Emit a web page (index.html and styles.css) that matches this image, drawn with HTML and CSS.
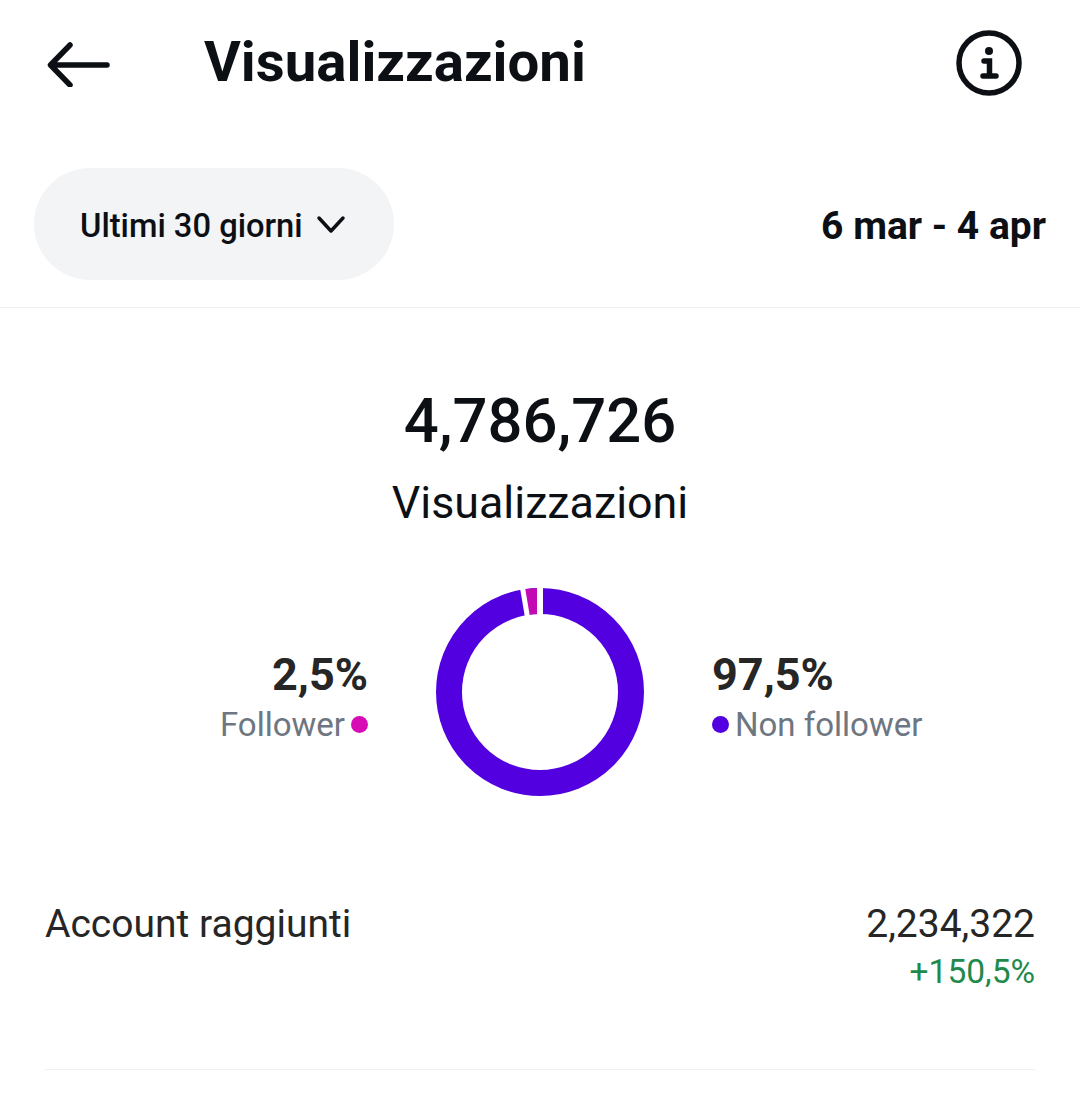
FILE: index.html
```html
<!DOCTYPE html>
<html lang="it">
<head>
    <meta charset="UTF-8">
    <title>Visualizzazioni</title>
    <link rel="stylesheet" href="styles.css">
</head>
<body>
    <header class="top-bar">
        <svg class="back-icon" width="64" height="48" viewBox="0 0 64 48">
            <path d="M61 26H5M24 6L4.500 26l19.500 20"/>
        </svg>
        <h1 class="page-title">Visualizzazioni</h1>
        <svg class="info-icon" width="66" height="66" viewBox="0 0 66 66">
            <circle class="info-ring" cx="33" cy="33" r="30"/>
            <circle class="info-dot" cx="33" cy="21" r="4"/>
            <path class="info-stem" d="M28 31H33.500V45.500M27 46H40"/>
        </svg>
    </header>

    <div class="filter-bar">
        <div class="range-pill">
            <span class="range-text">Ultimi 30 giorni</span>
            <svg class="chevron" width="30" height="20" viewBox="0 0 30 20">
                <path d="M3 3l12 13L27 3"/>
            </svg>
        </div>
        <div class="date-range">6 mar - 4 apr</div>
    </div>

    <section class="summary">
        <div class="total">4,786,726</div>
        <div class="total-label">Visualizzazioni</div>

        <div class="chart-row">
            <div class="legend legend-left">
                <div class="legend-value">2,5%</div>
                <div class="legend-name">Follower<span class="dot dot-pink"></span></div>
            </div>
            <svg class="donut" width="208" height="208" viewBox="0 0 208 208">
                <circle class="donut-main" cx="104" cy="104" r="91"/>
                <circle class="donut-small" cx="104" cy="104" r="91" pathLength="360" stroke-dasharray="10 350" stroke-dashoffset="100"/>
                <path class="donut-gap" d="M104 28V-2"/>
                <path class="donut-gap gap-thin" d="M91.300 28L86.200 -2"/>
            </svg>
            <div class="legend legend-right">
                <div class="legend-value">97,5%</div>
                <div class="legend-name"><span class="dot dot-purple"></span>Non follower</div>
            </div>
        </div>
    </section>

    <section class="metric">
        <div class="metric-name">Account raggiunti</div>
        <div class="metric-values">
            <div class="metric-value">2,234,322</div>
            <div class="metric-change">+150,5%</div>
        </div>
    </section>
</body>
</html>
```

FILE: styles.css
```css
body {
    margin: 0;
    background-color: #fff;
    color: #0c1014;
    font-family: Roboto, "Liberation Sans", sans-serif;
}
.top-bar {
    display: flex;
    align-items: center;
    height: 126px;
    padding: 0 58px 0 46px;
}
.back-icon path {
    fill: none;
    stroke: #0c1014;
    stroke-width: 5.5;
    stroke-linecap: round;
    stroke-linejoin: round;
}
.page-title {
    flex: 1;
    margin: 0 0 2px 94px;
    font-size: 56.4px;
    font-weight: 700;
    letter-spacing: 0;
}
.info-ring {
    fill: none;
    stroke: #0c1014;
    stroke-width: 5.5;
}
.info-dot {
    fill: #0c1014;
}
.info-stem {
    fill: none;
    stroke: #0c1014;
    stroke-width: 5.5;
    stroke-linecap: round;
}
.filter-bar {
    display: flex;
    align-items: center;
    justify-content: space-between;
    height: 182px;
    padding: 15px 34px 0;
    border-bottom: 1px solid #f0f1f3;
    box-sizing: border-box;
}
.range-pill {
    display: flex;
    align-items: center;
    gap: 13px;
    height: 112px;
    padding: 0 48px 0 46px;
    border-radius: 56px;
    background-color: #f3f4f6;
    font-size: 32.7px;
    font-weight: 500;
}
.range-text {
    padding-top: 4px;
}
.chevron {
    margin-top: 2px;
}
.chevron path {
    fill: none;
    stroke: #0c1014;
    stroke-width: 3.5;
    stroke-linecap: round;
    stroke-linejoin: round;
}
.date-range {
    padding-top: 4px;
    font-size: 39px;
    font-weight: 700;
}
.summary {
    display: flex;
    flex-direction: column;
    align-items: center;
}
.total {
    margin-top: 75px;
    font-size: 61.6px;
    font-weight: 500;
    line-height: 76px;
}
.total-label {
    margin-top: 16px;
    font-size: 44.8px;
    line-height: 56px;
}
.chart-row {
    display: flex;
    align-items: center;
    justify-content: center;
    margin-top: 57px;
    color: #262626;
}
.legend {
    width: 230px;
    margin-top: 10px;
}
.legend-left {
    margin-right: 68px;
    text-align: right;
}
.legend-right {
    margin-left: 68px;
}
.legend-value {
    font-size: 45px;
    font-weight: 700;
    line-height: 55px;
}
.legend-name {
    display: flex;
    align-items: center;
    font-size: 33px;
    line-height: 46px;
    color: #6e7681;
}
.legend-left .legend-name {
    justify-content: flex-end;
}
.dot {
    width: 17px;
    height: 17px;
    border-radius: 50%;
}
.dot-pink {
    margin-left: 6px;
    background-color: #d80cb4;
}
.dot-purple {
    margin-right: 6px;
    background-color: #5200e0;
}
.donut {
    overflow: visible;
}
.donut-main,
.donut-small {
    fill: none;
    stroke-width: 26;
}
.donut-main {
    stroke: #5200e0;
}
.donut-small {
    stroke: #c209b4;
}
.donut-gap {
    fill: none;
    stroke: #fff;
    stroke-width: 6;
}
.gap-thin {
    stroke-width: 5;
}
.metric {
    display: flex;
    justify-content: space-between;
    align-items: flex-start;
    margin: 0 45px;
    padding: 103px 0 74px;
    border-bottom: 1px solid #f0f1f3;
    color: #262626;
}
.metric-name,
.metric-value {
    font-size: 39px;
    line-height: 50px;
}
.metric-values {
    text-align: right;
}
.metric-change {
    font-size: 33.5px;
    line-height: 46px;
    color: #1f8a4c;
}
```
